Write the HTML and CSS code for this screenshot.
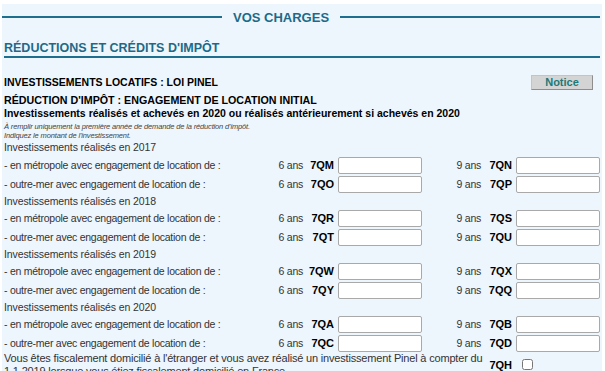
FILE: index.html
```html
<!DOCTYPE html>
<html lang="fr">
<head>
<meta charset="utf-8">
<title>Vos charges</title>
<link rel="stylesheet" href="styles.css">
</head>
<body>
<div class="panel">
  <div class="rubric"><span class="rule rule-left"></span><span class="rubric-title">VOS CHARGES</span><span class="rule"></span></div>
  <h2 class="section">RÉDUCTIONS ET CRÉDITS D'IMPÔT</h2>
  <div class="head-row">
    <span class="cap">INVESTISSEMENTS LOCATIFS : LOI PINEL</span>
    <button class="notice" type="button">Notice</button>
  </div>
  <div class="cap sub">RÉDUCTION D'IMPÔT : ENGAGEMENT DE LOCATION INITIAL</div>
  <div class="lead">Investissements réalisés et achevés en 2020 ou réalisés antérieurement si achevés en 2020</div>
  <div class="hint">À remplir uniquement la première année de demande de la réduction d'impôt.<br>Indiquez le montant de l'investissement.</div>

  <div class="grid">
    <div class="year year-first">Investissements réalisés en 2017</div>
    <div class="lbl">- en métropole avec engagement de location de :</div><div class="ans">6 ans</div><div class="code">7QM</div><div class="cell"><input class="box" type="text"></div><div class="ans">9 ans</div><div class="code">7QN</div><div class="cell"><input class="box" type="text"></div>
    <div class="lbl">- outre-mer avec engagement de location de :</div><div class="ans">6 ans</div><div class="code">7QO</div><div class="cell"><input class="box" type="text"></div><div class="ans">9 ans</div><div class="code">7QP</div><div class="cell"><input class="box" type="text"></div>

    <div class="year">Investissements réalisés en 2018</div>
    <div class="lbl">- en métropole avec engagement de location de :</div><div class="ans">6 ans</div><div class="code">7QR</div><div class="cell"><input class="box" type="text"></div><div class="ans">9 ans</div><div class="code">7QS</div><div class="cell"><input class="box" type="text"></div>
    <div class="lbl">- outre-mer avec engagement de location de :</div><div class="ans">6 ans</div><div class="code">7QT</div><div class="cell"><input class="box" type="text"></div><div class="ans">9 ans</div><div class="code">7QU</div><div class="cell"><input class="box" type="text"></div>

    <div class="year">Investissements réalisés en 2019</div>
    <div class="lbl">- en métropole avec engagement de location de :</div><div class="ans">6 ans</div><div class="code">7QW</div><div class="cell"><input class="box" type="text"></div><div class="ans">9 ans</div><div class="code">7QX</div><div class="cell"><input class="box" type="text"></div>
    <div class="lbl">- outre-mer avec engagement de location de :</div><div class="ans">6 ans</div><div class="code">7QY</div><div class="cell"><input class="box" type="text"></div><div class="ans">9 ans</div><div class="code">7QQ</div><div class="cell"><input class="box" type="text"></div>

    <div class="year">Investissements réalisés en 2020</div>
    <div class="lbl">- en métropole avec engagement de location de :</div><div class="ans">6 ans</div><div class="code">7QA</div><div class="cell"><input class="box" type="text"></div><div class="ans">9 ans</div><div class="code">7QB</div><div class="cell"><input class="box" type="text"></div>
    <div class="lbl">- outre-mer avec engagement de location de :</div><div class="ans">6 ans</div><div class="code">7QC</div><div class="cell"><input class="box" type="text"></div><div class="ans">9 ans</div><div class="code">7QD</div><div class="cell"><input class="box" type="text"></div>

    <div class="long">Vous êtes fiscalement domicilié à l'étranger et vous avez réalisé un investissement Pinel à compter du 1.1.2019 lorsque vous étiez fiscalement domicilié en France.</div>
    <div class="code code-last">7QH</div>
    <div class="cell cell-last"><input class="chk" type="checkbox"></div>
  </div>
</div>
</body>
</html>
```
FILE: styles.css
```css
html, body {
  margin: 0;
  padding: 0;
  background: #ffffff;
  overflow: hidden;
}
body {
  font-family: "Liberation Sans", Arial, sans-serif;
  color: #333333;
}
.panel {
  margin: 4px 3px 0 2px;
  background: #edf5fd;
  padding: 2px 2px 0 2px;
  height: 400px;
}
.rubric {
  display: flex;
  align-items: center;
  gap: 11px;
  height: 22px;
  margin-left: -2px;
}
.rule {
  flex: 1;
  height: 2px;
  background: #1d6f8d;
}
.rule-left {
  flex: 0 0 220px;
}
.rubric-title {
  font-size: 13px;
  font-weight: bold;
  color: #1d6a88;
}
.section {
  margin: 13px 0 0 0;
  padding: 0 0 1px 0;
  font-size: 12.5px;
  font-weight: bold;
  color: #1d6a88;
  border-bottom: 2px solid #1d6f8d;
  line-height: 14px;
}
.head-row {
  display: flex;
  justify-content: space-between;
  align-items: center;
  margin-top: 16px;
  height: 16px;
}
.cap {
  font-size: 10.5px;
  font-weight: bold;
  color: #000;
  line-height: 13px;
}
.notice {
  width: 62px;
  height: 15px;
  margin-right: 7px;
  padding: 0;
  border: 1px solid #c4c4c4;
  border-right-color: #8e8e8e;
  border-bottom-color: #8e8e8e;
  background: #d4d4d4;
  color: #1c7a78;
  font-family: "Liberation Sans", Arial, sans-serif;
  font-size: 11px;
  font-weight: bold;
  line-height: 13px;
}
.sub {
  margin-top: 4px;
  font-size: 10.7px;
}
.lead {
  font-size: 10.5px;
  font-weight: bold;
  color: #000;
  line-height: 13px;
}
.hint {
  margin-top: 2px;
  font-size: 7.5px;
  letter-spacing: -0.15px;
  font-style: italic;
  color: #444;
  line-height: 9px;
}
.grid {
  display: grid;
  grid-template-columns: 266px 33px 34px 86px 58px 34px 86px;
  font-size: 10.5px;
  letter-spacing: -0.25px;
}
.year {
  grid-column: 1 / -1;
  height: 15px;
  line-height: 15px;
  letter-spacing: -0.1px;
}
.year-first {
  height: 16px;
  line-height: 14px;
}
.lbl, .ans, .code {
  line-height: 19px;
  white-space: nowrap;
}
.ans { text-align: right; }
.code {
  text-align: right;
  padding-right: 3px;
  font-size: 11px;
  letter-spacing: 0;
  font-weight: bold;
  color: #000;
}
.cell {
  display: flex;
  align-items: center;
  height: 19px;
}
.box {
  box-sizing: border-box;
  width: 84px;
  height: 17px;
  margin: 0 0 0 1px;
  border: 1px solid #a9a9a9;
  border-radius: 2px;
  background: #fff;
}
.long {
  grid-column: 1 / 6;
  margin-top: -1px;
  margin-right: -8px;
  font-size: 11px;
  letter-spacing: -0.18px;
  line-height: 13px;
}
.code-last {
  align-self: start;
  line-height: 24px;
}
.cell-last {
  align-items: flex-start;
}
.chk {
  width: 11px;
  height: 11px;
  margin: 6px 0 0 7px;
}
```
